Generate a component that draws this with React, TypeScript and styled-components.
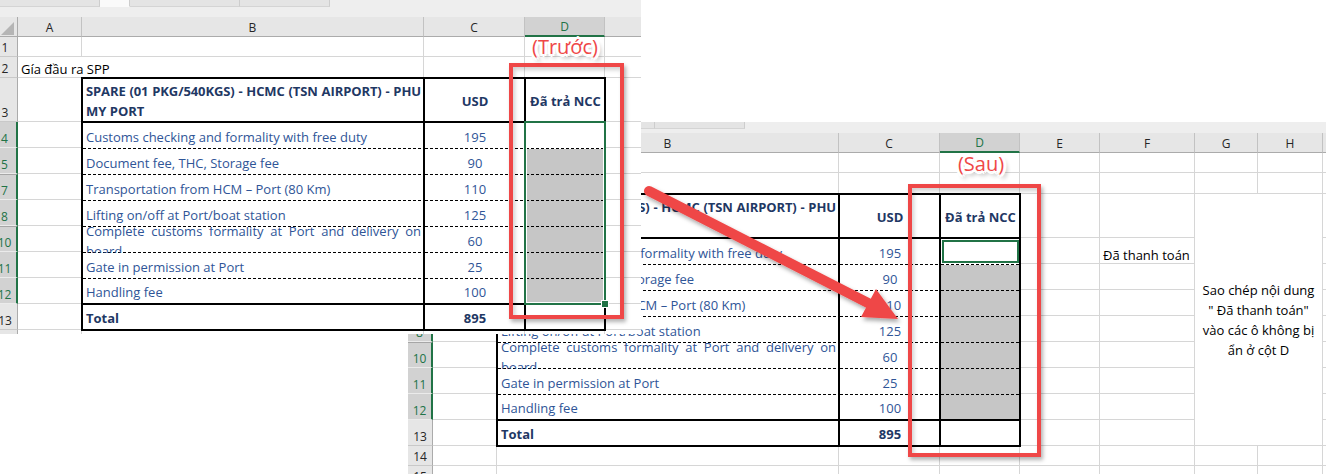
import React from "react";
import styled, { createGlobalStyle, css } from "styled-components";

const GREEN = "#217346";
const RED = "#ef4747";
const GRID = "#d6d6d6";
const INK = "#2f5597";
const INK_DARK = "#1f3864";

type Col = { key: string; w: number };
type Row = { n: number; h: number; afterHidden?: boolean };

const COLS: Col[] = [
  { key: "A", w: 64 },
  { key: "B", w: 342 },
  { key: "C", w: 101 },
  { key: "D", w: 80 },
  { key: "E", w: 80 },
  { key: "F", w: 95 },
  { key: "G", w: 63 },
  { key: "H", w: 65 },
  { key: "I", w: 64 },
];

const ROWS: Row[] = [
  { n: 1, h: 20 },
  { n: 2, h: 21 },
  { n: 3, h: 44 },
  { n: 4, h: 26 },
  { n: 5, h: 26 },
  { n: 7, h: 26, afterHidden: true },
  { n: 8, h: 26 },
  { n: 10, h: 26, afterHidden: true },
  { n: 11, h: 26 },
  { n: 12, h: 26 },
  { n: 13, h: 26 },
  { n: 14, h: 20 },
  { n: 15, h: 20 },
];

const COSTS = [
  { label: "Customs checking and formality with free duty", usd: 195 },
  { label: "Document fee, THC, Storage fee", usd: 90 },
  { label: "Transportation from HCM – Port (80 Km)", usd: 110 },
  { label: "Lifting on/off at Port/boat station", usd: 125 },
  { label: "Complete customs formality at Port and delivery on board", usd: 60 },
  { label: "Gate in permission at Port", usd: 25 },
  { label: "Handling fee", usd: 100 },
];

// grid line helpers: column 1 / row 1 are the headers
const col = (k: string) => COLS.findIndex((c) => c.key === k) + 2;
const row = (n: number) => ROWS.findIndex((r) => r.n === n) + 2;

const GlobalStyle = createGlobalStyle`
  * { box-sizing: border-box; }
  html, body { margin: 0; padding: 0; background: #fff; }
  body { font-family: "Open Sans", "Liberation Sans", sans-serif; }
`;

const Page = styled.div`
  position: relative;
  width: 1326px;
  height: 474px;
  overflow: hidden;
  background: #fff;
  font-family: "Open Sans", "Liberation Sans", sans-serif;
`;

const Window = styled.div<{ $x: number; $y: number; $w: number; $h: number }>`
  position: absolute;
  left: ${(p) => p.$x}px;
  top: ${(p) => p.$y}px;
  width: ${(p) => p.$w}px;
  height: ${(p) => p.$h}px;
  overflow: hidden;
  background: #fff;
  display: flex;
  flex-direction: column;
`;

const Toolbar = styled.div<{ $h: number }>`
  flex: none;
  height: ${(p) => p.$h}px;
  background: #eeeeee;
  display: flex;
  align-items: flex-start;
`;

const TabSlot = styled.div<{ $w: number; $open?: boolean }>`
  flex: none;
  width: ${(p) => p.$w}px;
  height: 7px;
  background: ${(p) => (p.$open ? "#fafafa" : "#e4e4e4")};
  border-right: 1px solid #cdcdcd;
  border-bottom: 1px solid ${(p) => (p.$open ? "transparent" : "#d4d4d4")};
`;

const Grid = styled.div<{ $cols: string; $rows: string }>`
  flex: none;
  display: grid;
  grid-template-columns: ${(p) => p.$cols};
  grid-template-rows: ${(p) => p.$rows};
`;

type Place = { $r: number; $c: number; $rs?: number; $cs?: number };

const placed = css<Place>`
  grid-row: ${(p) => p.$r} / span ${(p) => p.$rs ?? 1};
  grid-column: ${(p) => p.$c} / span ${(p) => p.$cs ?? 1};
`;

const Corner = styled.div`
  grid-row: 1;
  grid-column: 1;
  background: #e6e6e6;
  border-right: 1px solid #ababab;
  border-bottom: 1px solid #ababab;
  display: flex;
  align-items: flex-end;
  justify-content: flex-end;
  padding: 0 3px 1px 0;
`;

const ColHead = styled.div<Place & { $sel?: boolean }>`
  ${placed};
  display: flex;
  align-items: flex-end;
  justify-content: center;
  font-size: 12px;
  line-height: 16px;
  color: ${(p) => (p.$sel ? GREEN : "#262626")};
  background: ${(p) => (p.$sel ? "#d2d2d2" : "#e6e6e6")};
  border-right: 1px solid #c2c2c2;
  border-bottom: ${(p) => (p.$sel ? `2px solid ${GREEN}` : "1px solid #ababab")};
`;

const RowHead = styled.div<Place & { $sel?: boolean; $gap?: boolean }>`
  ${placed};
  display: flex;
  align-items: flex-end;
  justify-content: center;
  font-size: 12px;
  line-height: 16px;
  color: ${(p) => (p.$sel ? GREEN : "#262626")};
  background: ${(p) => (p.$sel ? "#d2d2d2" : "#e6e6e6")};
  border-right: ${(p) => (p.$sel ? `2px solid ${GREEN}` : "1px solid #ababab")};
  border-bottom: 1px solid ${(p) => (p.$sel ? "#ebebeb" : "#c9c9c9")};
  border-top: ${(p) => (p.$gap ? "1px solid #a6a6a6" : "none")};
`;

const Cell = styled.div<Place & { $spill?: boolean }>`
  ${placed};
  display: flex;
  align-items: flex-end;
  padding: 0 2px 0 3px;
  border-right: 1px solid ${(p) => (p.$spill ? "transparent" : GRID)};
  border-bottom: 1px solid ${GRID};
  font-size: 13px;
  line-height: 16px;
  color: #000;
  white-space: nowrap;
`;

const Table = styled.div<Place>`
  ${placed};
  margin: -1px;
  border: 2px solid #000;
  background: #fff;
  display: grid;
  grid-template-columns: 342px 101px 78px;
  grid-template-rows: 44px repeat(7, 26px) 24px;
`;

type Edge = "thick" | "dash" | "none";

const TCell = styled.div<{
  $right?: boolean;
  $bottom?: Edge;
  $end?: boolean;
  $center?: boolean;
  $bold?: boolean;
  $fill?: boolean;
}>`
  display: flex;
  align-items: ${(p) => (p.$end ? "flex-end" : "center")};
  justify-content: ${(p) => (p.$center ? "center" : "flex-start")};
  padding: 1px 2px 0 3px;
  overflow: hidden;
  min-width: 0;
  font-size: 13px;
  line-height: 20px;
  font-weight: ${(p) => (p.$bold ? 700 : 400)};
  color: ${(p) => (p.$bold ? INK_DARK : INK)};
  border-right: ${(p) => (p.$right ? "2px solid #000" : "none")};
  border-bottom: ${(p) => (p.$bottom === "thick" ? "2px solid #000" : "none")};
  background-color: ${(p) => (p.$fill ? "#c6c6c6" : "transparent")};
  ${(p) =>
    p.$bottom === "dash" &&
    css`
      background-image: linear-gradient(to right, #000 3px, transparent 3px);
      background-size: 5px 1px;
      background-repeat: repeat-x;
      background-position: 0 100%;
    `}
`;

const Justified = styled.div`
  width: 100%;
  text-align: justify;
`;

const FullLine = styled.div`
  text-align: justify;
  text-align-last: justify;
  letter-spacing: -0.1px;
  white-space: nowrap;
`;

const RangeBox = styled.div<Place>`
  ${placed};
  position: relative;
  margin: -1px;
  border: 2px solid ${GREEN};
  box-shadow: inset 0 0 0 1px #fff;
`;

const FillHandle = styled.span`
  position: absolute;
  right: -5px;
  bottom: -5px;
  width: 8px;
  height: 8px;
  background: ${GREEN};
  border: 1px solid #fff;
`;

const ActiveCell = styled.div<Place>`
  ${placed};
  margin: 2px 1px 1px 2px;
  border: 2px solid ${GREEN};
`;

const Note = styled.div<Place>`
  ${placed};
  background: #fff;
  border-right: 1px solid ${GRID};
  border-bottom: 1px solid ${GRID};
  display: flex;
  align-items: center;
  justify-content: center;
  text-align: center;
  font-size: 13px;
  line-height: 20px;
  color: #000;
`;

const Highlight = styled.div<{ $x: number; $y: number; $w: number; $h: number }>`
  position: absolute;
  left: ${(p) => p.$x}px;
  top: ${(p) => p.$y}px;
  width: ${(p) => p.$w}px;
  height: ${(p) => p.$h}px;
  border: 4px solid ${RED};
  box-shadow: 2px 3px 4px rgba(0, 0, 0, 0.3), inset 2px 3px 4px rgba(0, 0, 0, 0.18);
`;

const Callout = styled.span<{ $x: number; $y: number }>`
  position: absolute;
  left: ${(p) => p.$x}px;
  top: ${(p) => p.$y}px;
  transform: translateX(-50%);
  font-size: 20px;
  line-height: 20px;
  color: ${RED};
  white-space: nowrap;
  text-shadow: 3px 0 #fff, -3px 0 #fff, 0 3px #fff, 0 -3px #fff, 2px 2px #fff,
    -2px -2px #fff, 2px -2px #fff, -2px 2px #fff, 3px 4px 4px rgba(0, 0, 0, 0.45);
`;

const ArrowLayer = styled.svg`
  position: absolute;
  left: 0;
  top: 0;
  pointer-events: none;
`;

type SheetProps = {
  x: number;
  y: number;
  w: number;
  h: number;
  bar: number;
  texts: Record<string, string>;
  overlay: React.ReactNode;
  children: React.ReactNode;
};

function Sheet({ x, y, w, h, bar, texts, overlay, children }: SheetProps) {
  const cols = "25px " + COLS.map((c) => `${c.w}px`).join(" ");
  const rows = "20px " + ROWS.map((r) => `${r.h}px`).join(" ");
  return (
    <Window $x={x} $y={y} $w={w} $h={h}>
      <Toolbar $h={bar}>
        <TabSlot $w={107} />
        <TabSlot $w={30} $open />
        <TabSlot $w={110} />
        <TabSlot $w={90} />
      </Toolbar>
      <Grid $cols={cols} $rows={rows}>
        {ROWS.map((r) =>
          COLS.map((c) => {
            const id = `${c.key}${r.n}`;
            return (
              <Cell key={id} $r={row(r.n)} $c={col(c.key)} $spill={id === "A2"}>
                {texts[id]}
              </Cell>
            );
          })
        )}
        <Corner>
          <svg width="13" height="13" viewBox="0 0 13 13">
            <polygon points="0,13 13,13 13,0" fill="#b5b5b5" />
          </svg>
        </Corner>
        {COLS.map((c) => (
          <ColHead key={c.key} $r={1} $c={col(c.key)} $sel={c.key === "D"}>
            {c.key}
          </ColHead>
        ))}
        {ROWS.map((r) => (
          <RowHead
            key={r.n}
            $r={row(r.n)}
            $c={1}
            $sel={r.n >= 4 && r.n <= 12}
            $gap={r.afterHidden}
          >
            {r.n}
          </RowHead>
        ))}
        {children}
      </Grid>
      {overlay}
    </Window>
  );
}

function CostTable() {
  return (
    <Table $r={row(3)} $c={col("B")} $rs={row(13) - row(3) + 1} $cs={3}>
      <TCell $right $bottom="thick" $end $bold>
        <Justified>
          <FullLine>SPARE (01 PKG/540KGS) - HCMC (TSN AIRPORT) - PHU</FullLine>
          <div>MY PORT</div>
        </Justified>
      </TCell>
      <TCell $right $bottom="thick" $center $bold>
        USD
      </TCell>
      <TCell $bottom="thick" $center $bold>
        Đã trả NCC
      </TCell>
      {COSTS.map((c, i) => {
        const edge: Edge = i === COSTS.length - 1 ? "thick" : "dash";
        return (
          <React.Fragment key={c.label}>
            <TCell $right $bottom={edge}>
              <Justified>{c.label}</Justified>
            </TCell>
            <TCell $right $bottom={edge} $center>
              {c.usd}
            </TCell>
            <TCell $bottom={edge} $fill={i > 0} />
          </React.Fragment>
        );
      })}
      <TCell $right $bold>
        Total
      </TCell>
      <TCell $right $center $bold>
        895
      </TCell>
      <TCell />
    </Table>
  );
}

function Arrow() {
  return (
    <ArrowLayer width={1326} height={474} viewBox="0 0 1326 474">
      <defs>
        <filter id="arrowShadow" x="-10%" y="-20%" width="130%" height="150%">
          <feDropShadow dx="2" dy="3" stdDeviation="2" floodColor="#000" floodOpacity="0.35" />
        </filter>
      </defs>
      <g filter="url(#arrowShadow)" fill={RED}>
        <line x1={649} y1={191} x2={870} y2={304} stroke={RED} strokeWidth={10} strokeLinecap="round" />
        <polygon points="898,319 861,317 876,289" />
      </g>
    </ArrowLayer>
  );
}

export default function App() {
  return (
    <>
      <GlobalStyle />
      <Page>
        <Sheet
          x={408}
          y={122}
          w={918}
          h={352}
          bar={11}
          texts={{ A2: "Gía đầu ra SPP", F4: "Đã thanh toán" }}
          overlay={
            <>
              <Highlight $x={500} $y={62} $w={133} $h={273} />
              <Callout $x={573} $y={32}>
                (Sau)
              </Callout>
            </>
          }
        >
          <CostTable />
          <ActiveCell $r={row(4)} $c={col("D")} />
          <Note $r={row(3)} $c={col("G")} $rs={row(13) - row(3) + 1} $cs={2}>
            <div>
              Sao chép nội dung
              <br />
              &quot; Đã thanh toán&quot;
              <br />
              vào các ô không bị
              <br />
              ẩn ở cột D
            </div>
          </Note>
        </Sheet>
        <Sheet
          x={-7}
          y={0}
          w={648}
          h={334}
          bar={17}
          texts={{ A2: "Gía đầu ra SPP" }}
          overlay={
            <>
              <Highlight $x={516} $y={63} $w={115} $h={256} />
              <Callout $x={572} $y={37}>
                (Trước)
              </Callout>
            </>
          }
        >
          <CostTable />
          <RangeBox $r={row(4)} $c={col("D")} $rs={row(12) - row(4) + 1}>
            <FillHandle />
          </RangeBox>
        </Sheet>
        <Arrow />
      </Page>
    </>
  );
}
